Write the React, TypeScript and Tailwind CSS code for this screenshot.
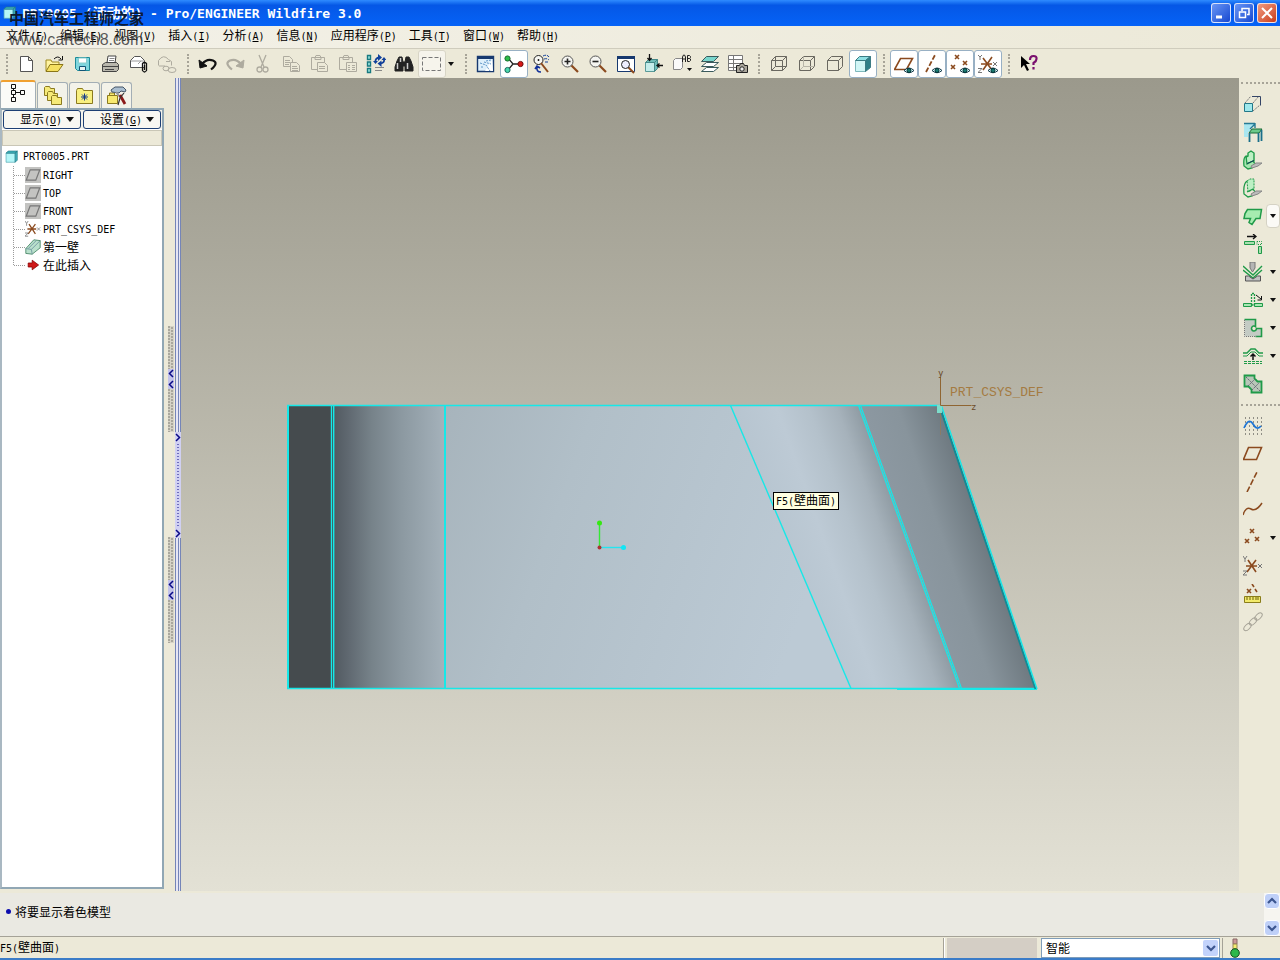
import { Fragment, type ReactNode } from 'react'

const CJK = "font-['Noto_Sans_CJK_SC',sans-serif]"
const MONO = "font-['DejaVu_Sans_Mono','Noto_Sans_CJK_SC',monospace]"

/* Latin runs are set in a 6px-wide monospace beside 12px ideographs. */
function Label({ text }: { text: string }) {
  return (
    <>
      {text.split(/([\u4e00-\u9fff]+)/).filter(Boolean).map((run, i) =>
        /[\u4e00-\u9fff]/.test(run) ? (
          <Fragment key={i}>{run}</Fragment>
        ) : (
          <span key={i} className={`${MONO} text-[10px]`}>{run}</span>
        ),
      )}
    </>
  )
}

function Ic({ children, size = 20 }: { children: ReactNode; size?: number }) {
  return (
    <svg width={size} height={size} viewBox="0 0 20 20" fill="none" stroke="#222" strokeWidth="1" className="shrink-0" aria-hidden="true">
      {children}
    </svg>
  )
}

const G = '#aeab9f'
const Brown = '#8b4a1e'
const Green = '#1f9a48'

const Eye = () => (
  <g>
    <path d="M10 16.500q5-5 10 0q-5 4.500-10 0z" fill="#dff" stroke="#134" />
    <circle cx="15" cy="16.500" r="2" fill="#187a72" stroke="#033" />
  </g>
)
const Cube = ({ back }: { back: number }) => (
  <g stroke="#6a6860">
    <path d="M2.500 6.500h11v10h-11zM2.500 6.500l4-4h11l-4 4M17.500 2.500v10l-4 4" />
    {back > 0 && <path d="M6.500 2.500v10h11M6.500 12.500l-4 4" stroke={back > 1 ? '#6a6860' : '#b8b5a8'} />}
  </g>
)
const Xs = ({ d, c = Brown }: { d: string; c?: string }) => <path d={d} stroke={c} strokeWidth="1.600" />

const icons: Record<string, ReactNode> = {
  new: <path d="M3.500 2.500h8l4 4v11h-12zM11.500 2.500v4h4" fill="#fff" stroke="#555" />,
  open: (
    <g>
      <path d="M1 17V6h5l1 2h7v3" fill="#fff3a0" stroke="#a08a20" />
      <path d="M1 17.500l4-7h13l-5 7z" fill="#f5e060" stroke="#8a7618" />
      <path d="M9 5q4-4 7 0M17.500 2v4h-4" stroke="#111" />
    </g>
  ),
  save: (
    <g>
      <path d="M2.500 3.500h14v13h-12l-2-2z" fill="#7fd6de" stroke="#1d8a98" />
      <path d="M5.500 4h8v5h-8z" fill="#fff" stroke="#8cc" />
      <path d="M6.500 12.500h6v4h-6z" fill="#e8f4f4" stroke="#157" />
    </g>
  ),
  print: (
    <g stroke="#444">
      <path d="M6 9l1-7h8l-1 7z" fill="#fff" />
      <path d="M8.500 4.500h5M8 6.500h5" stroke="#888" />
      <path d="M1.500 10.500l3-2h11l2 2v5l-2 2h-14z" fill="#b9b7ad" />
      <path d="M2 12.500h15M4 15.500h9" />
    </g>
  ),
  mail: (
    <g>
      <path d="M1.500 6.500l4-4h6l4 4v7h-14z" fill="#fff" stroke="#555" />
      <path d="M2 7h13M12 7l-3 3" stroke="#999" />
      <path d="M13.500 9.500q2-2 4 0v7q-2 3-4 0zM15.500 11v5" stroke="#111" strokeWidth="1.300" />
    </g>
  ),
  link: (
    <g stroke={G}>
      <path d="M1.500 11.500v-5q5-7 10-1l3 2v4" />
      <path d="M2 12h6M9 7.500h4" />
      <ellipse cx="9" cy="14.500" rx="3" ry="2.300" />
      <ellipse cx="15" cy="16" rx="4" ry="2.500" />
    </g>
  ),
  undo: (
    <g stroke="#111">
      <path d="M4 10q5-6 11-3.500t-2 9" strokeWidth="2.200" />
      <path d="M1 6l1 8 7-2z" fill="#111" />
    </g>
  ),
  redo: (
    <g stroke={G}>
      <path d="M15 10Q10 4 4 6.500t2 9" strokeWidth="2.200" />
      <path d="M18 6l-1 8-7-2z" fill={G} />
    </g>
  ),
  cut: (
    <g stroke={G} strokeWidth="1.300">
      <path d="M5 1l5 12M12 1L7 13" />
      <circle cx="5.500" cy="15.500" r="2.500" />
      <circle cx="11.500" cy="15.500" r="2.500" />
    </g>
  ),
  copy: (
    <g stroke={G}>
      <path d="M1.500 2.500h6l3 3v7h-9zM3 6.500h5M3 8.500h5M3 10.500h4" />
      <path d="M8.500 8.500h6l3 3v6h-9z" fill="#ece9d8" />
      <path d="M10 12.500h5M10 14.500h6M10 16.500h6" />
    </g>
  ),
  paste: (
    <g stroke={G}>
      <path d="M1.500 3.500h13v12h-13zM5 3.500l1-2h4l1 2v2H5z" />
      <path d="M7.500 8.500h7l3 3v6h-10z" fill="#ece9d8" />
      <path d="M9 12.500h6M9 14.500h6" />
    </g>
  ),
  pasteSpecial: (
    <g stroke={G}>
      <path d="M1.500 3.500h13v12h-13zM5 3.500l1-2h4l1 2v2H5z" />
      <path d="M8.500 8.500h10v9h-10z" fill="#ece9d8" />
      <path d="M10 11.500h2M14 11.500h3M10 13.500h2M14 13.500h3M10 15.500h2M14 15.500h3" />
    </g>
  ),
  regen: (
    <g>
      <path d="M1.500 1.500h3v4h-3zM1.500 8h3v4h-3zM1.500 14.500h3v4h-3z" fill="#9fe6e0" stroke="#187a80" strokeWidth="1.400" />
      <path d="M9.500 8q-.500-4 4-4.500M18 5q1 4-4 4.500" stroke="#12419a" strokeWidth="1.800" />
      <path d="M12 0l4 3.500-4 3.500zM15.500 6.500l-4 3 4 3.500zM7 7h5l-2.500 3zM15.500 6h5L18 3z" fill="#12419a" stroke="none" />
      <path d="M9 13.500h9M9 16.500h7" stroke="#888" />
    </g>
  ),
  find: (
    <g fill="#222">
      <path d="M3 7l2-4h3l1 5v9H1v-4zM17 7l-2-4h-3l-1 5v9h8v-4z" />
      <path d="M9 8h2v4H9z" />
      <path d="M3.500 9v6M13.500 9v6M6.500 4v4" stroke="#ccc" strokeWidth="1.500" />
    </g>
  ),
  select: <path d="M.5 3.500h18v13H.5z" stroke="#777" strokeDasharray="4 2" />,
  sketchView: (
    <g>
      <path d="M1.500 2.500h16v15h-16z" fill="#dff0fb" stroke="#17396f" strokeWidth="1.400" />
      <path d="M1 3.500h17" stroke="#17396f" strokeWidth="3" />
      <path d="M9 17l7-11 1 11z" fill="#fff" stroke="none" />
      <path d="M4 9l6 2 4 6M8 8l7 2M5 13h3M10 7l5-1" stroke="#5f96c8" strokeDasharray="2 1" />
    </g>
  ),
  spin: (
    <g>
      <path d="M4 4l5 6-5 6M9 10h7" strokeWidth="1.300" />
      <circle cx="3.500" cy="4.500" r="2.600" fill="#2dbd48" stroke="#176b2c" />
      <circle cx="3.500" cy="16" r="2.600" fill="#4ad6ac" stroke="#176b5c" />
      <circle cx="16.500" cy="10" r="2.600" fill="#d81818" stroke="#701010" />
    </g>
  ),
  orient: (
    <g>
      <circle cx="6.500" cy="6" r="4.500" fill="#f7f7f2" />
      <path d="M9 9l7 9" stroke={Brown} strokeWidth="2" />
      <path d="M11 2q4-2 6 1M12 5q3-1 5 1M13 8h4" stroke="#12419a" strokeDasharray="3 1" />
      <path d="M5 13q-1 5 4 5M3 15l2-3 3 2" stroke="#12319a" strokeWidth="1.600" />
      <path d="M5.500 6h2M6.500 5v2" />
    </g>
  ),
  zoomIn: (
    <g>
      <path d="M11 11l7 7" stroke={Brown} strokeWidth="2.200" />
      <circle cx="7.500" cy="7.500" r="5.500" fill="#f4f4f0" stroke="#555" />
      <path d="M4.500 7.500h6M7.500 4.500v6" strokeWidth="1.600" />
    </g>
  ),
  zoomOut: (
    <g>
      <path d="M11 11l7 7" stroke={Brown} strokeWidth="2.200" />
      <circle cx="7.500" cy="7.500" r="5.500" fill="#f4f4f0" stroke="#555" />
      <path d="M4.500 7.500h6" strokeWidth="1.600" />
    </g>
  ),
  refit: (
    <g>
      <path d="M1.500 2.500h17v15h-17z" fill="#fff" stroke="#17396f" />
      <path d="M1 3.500h18" stroke="#17396f" strokeWidth="3" />
      <path d="M12 13l6 6" stroke={Brown} strokeWidth="2" />
      <circle cx="9.500" cy="10.500" r="4" fill="#eef" />
    </g>
  ),
  reorient: (
    <g>
      <path d="M1.500 8.500h9v9h-9z" fill="#c4ecea" stroke="#5a9a98" />
      <path d="M1.500 8.500l3-3h9l-3 3zM13.500 5.500v9l-3 3v-9z" fill="#6fbdb8" stroke="#488" />
      <path d="M5.500 0v6M3.500 4l2 2.500 2-2.500M19 11.500h-6M15.500 9.500l-2.500 2 2.500 2" stroke="#111" strokeWidth="1.300" />
    </g>
  ),
  views: (
    <g>
      <path d="M1.500 6.500l2-2h7v9l-2 2h-7z" fill="#fafafa" stroke="#888" />
      <path d="M10.500 8V3l1-2h1l1 2v5M10.500 5h3M15.500 1.500v6h2l1-1V5l-1-.500h-2M17.500 4.500l1-1v-1l-1-1h-2" />
      <path d="M15 14h5l-2.500 3z" fill="#111" stroke="none" />
    </g>
  ),
  layers: (
    <g stroke="#3a5a5c">
      <path d="M1.500 17.500l5-4h12l-5 4z" fill="#fff" />
      <path d="M1.500 12.500l5-4h12l-5 4z" fill="#fff" />
      <path d="M1.500 7.500l5-5h12l-5 5z" fill="#79d6cc" />
    </g>
  ),
  viewMgr: (
    <g>
      <path d="M.5 1.500h14v15H.5zM.5 5.500h14M.5 9.500h14M.5 13.500h14M5.500 1.500v15" fill="#fff" stroke="#777" />
      <path d="M8.500 11.500h3l1-2h3l1 2h3v7h-11z" fill="#aaa69c" stroke="#222" />
      <circle cx="14" cy="15" r="2.200" fill="#eee" />
    </g>
  ),
  wire: <Cube back={2} />,
  hidden: <Cube back={1} />,
  noHidden: <Cube back={0} />,
  shaded: (
    <g stroke="#3c7c84">
      <path d="M2.500 6.500h10v11h-10z" fill="#d2f6f6" stroke="#7fb8bc" />
      <path d="M2.500 6.500l4-4h11l-5 4z" fill="#8fe0e4" />
      <path d="M12.500 6.500l5-4v11l-5 4z" fill="#2f7f88" />
    </g>
  ),
  planeEye: (
    <g>
      <path d="M.5 15.500l6-11h12l-6 11z" stroke={Brown} strokeWidth="1.600" />
      <Eye />
    </g>
  ),
  axisEye: (
    <g>
      <path d="M4 18L13 1" stroke={Brown} strokeWidth="1.800" strokeDasharray="5 2" />
      <Eye />
    </g>
  ),
  pointEye: (
    <g>
      <Xs d="M5 1l4 4M9 1L5 5M1 11l4 4M5 11l-4 4M13 7l4 4M17 7l-4 4" />
      <Eye />
    </g>
  ),
  csysEye: (
    <g>
      <Xs d="M5 4l9 12M14 3L5 16M3 10h11" />
      <path d="M0 1l2 2 2-2M2 3v3M15 8l4 4M19 8l-4 4M0 14.500h4l-4 4h4" stroke="#777" />
      <Eye />
    </g>
  ),
  help: (
    <g>
      <path d="M2 2v12l3-3 3 6 2-1-3-6h4z" fill="#000" stroke="none" />
      <path d="M11 6q0-4 3.500-4t3 3q0 2-3 4v2M14.500 13v2.500" stroke="#7a0f6e" strokeWidth="2.200" />
    </g>
  ),
  extrude: (
    <g>
      <path d="M1.500 9.500h8v8h-8z" fill="#9fe8ec" stroke="#278" />
      <path d="M2 9l6-7M10 9l6-7M10 17l7-6" stroke="#777" strokeDasharray="2 1" />
      <path d="M9 2.500h8.500v9" stroke="#346" />
    </g>
  ),
  unattached: (
    <g>
      <path d="M1 2h11l-5 5v3H5v5H1z" fill="#a9e6f0" stroke="none" />
      <path d="M1 1.500h11M12 1v5M12 2l-5 5" stroke="#267a94" strokeWidth="1.400" />
      <path d="M6 11l3-4h10l-3 4z" fill="#6bc98a" stroke="#196b38" />
      <path d="M6.500 11v9M15.500 11v9M18.500 8v11" stroke="#1a6f8a" strokeWidth="1.800" />
    </g>
  ),
  flange: (
    <g>
      <path d="M3 7l2-1V3l3-2 3 2v8l-6 3-2 1z" fill="#bdf0c4" stroke={Green} strokeWidth="1.400" />
      <path d="M3 6q-3 2-2 10l4 3 4-1 4-3-3-4-6 3z" fill="#a6e6b0" stroke={Green} strokeWidth="1.300" />
      <path d="M8 16l5-3h6l-4 3-6 2z" fill="#bbb" stroke="#888" />
      <path d="M4 13.500l7-3" stroke="#123a5a" />
    </g>
  ),
  flangeDots: (
    <g>
      <path d="M4 3l3-2h4v10l-6 3z" fill="#bdf0c4" stroke={Green} strokeDasharray="2 1" />
      <path d="M4 3Q0 6 1 16l4 3 4-1 4-3-3-4-6 3" stroke={Green} strokeWidth="1.300" />
      <path d="M8 16l5-3h6l-4 3-6 2z" fill="#bbb" stroke="#888" />
    </g>
  ),
  flat: <path d="M4.500 3.500h14l-1.500 9h-4l-4 6-3-2 1.500-4H1l1-5z" fill="#a6ecb0" stroke={Green} strokeWidth="1.500" />,
  extend: (
    <g>
      <path d="M4 2.500h9M10 0l3 2.500L10 5" stroke="#111" strokeWidth="1.300" />
      <path d="M1.500 7.500h10v3h-10zM15.500 12.500h3v7h-3z" fill="#a9dfb0" stroke={Green} />
      <path d="M14 7.500h4.500v3H14z" stroke={Green} strokeDasharray="1 1" />
    </g>
  ),
  bend: (
    <g>
      <path d="M0 4l10 9 9-9M0 8l10 8 9-8" stroke={Green} strokeWidth="1.400" />
      <path d="M7 0h5v6l-2.500 4L7 6z" fill="#b5b5b5" stroke="#777" />
      <path d="M2.500 19v-5h3l4.500 3 4.500-3h3v5z" fill="#c2c2c2" stroke="#555" />
    </g>
  ),
  unbend: (
    <g>
      <path d="M.5 13.500h8v3h-8zM11.500 13.500h8v3h-8z" fill="#a9e6b3" stroke={Green} />
      <path d="M8.500 15V3.500h3V15z" stroke={Green} strokeDasharray="2 1" strokeWidth="1.300" />
      <path d="M13 5l5 4M18.500 6v4h-4" stroke="#111" />
    </g>
  ),
  corner: (
    <g>
      <path d="M1.500 1.500h11v7a2.500 2.500 0 1 0 1 2h5v8h-17z" fill="#c4cbc4" stroke="none" />
      <path d="M1.500 1.500h11v7a2.500 2.500 0 1 0 1 2h5v8h-6" stroke={Green} strokeWidth="1.600" />
      <path d="M1.500 2v16.500h12" stroke="#777" strokeDasharray="1 1" />
    </g>
  ),
  form: (
    <g>
      <path d="M0 10h4l4-4h4l4 4h4" stroke={Green} />
      <path d="M0 7h4l4-4h4l4 4h4" stroke={Green} strokeWidth="1.400" />
      <path d="M10 14V8.500M7.500 10.500L10 8l2.500 2.500" stroke="#111" strokeWidth="1.500" />
      <path d="M1 15.500h18M1 17.500h18" stroke={Green} strokeDasharray="3 1" />
    </g>
  ),
  flatten: (
    <g>
      <path d="M1.500 1.500h10v3l3 3h4v11h-10v-3l-3-3h-4z" fill="#b8c6b8" stroke={Green} strokeWidth="1.800" />
      <path d="M3 3l14 14M5 12l7-7M9 16l7-7" stroke="#667" strokeDasharray="2 1" />
    </g>
  ),
  sketch: (
    <g>
      <path d="M2 2h17M2 6h17M2 10h17M2 14h17M2 18h17" stroke="#333" strokeDasharray="1 3" />
      <path d="M1 12q5-11 9-4t8 2" stroke="#1d75d6" strokeWidth="1.700" />
    </g>
  ),
  plane: <path d="M.5 15.500l5-12h13l-5 12z" stroke={Brown} strokeWidth="1.600" />,
  axis: <path d="M4 20L14 0" stroke={Brown} strokeWidth="1.600" strokeDasharray="6 2" />,
  curve: <path d="M0 15q3-9 8-6t11-6" stroke={Brown} strokeWidth="1.500" />,
  points: <Xs d="M7 1l4 4M11 1L7 5M2 11l4 4M6 11l-4 4M12 9l4 4M16 9l-4 4" />,
  csys: (
    <g>
      <Xs d="M5 4l8 12M13 4L4 16M3 10h11" />
      <path d="M0 0l2 3 2-3M2 3v3M15 8l4 4M19 8l-4 4M0 15h4l-4 4h4" stroke="#777" />
    </g>
  ),
  analysis: (
    <g>
      <Xs d="M4 5l4 4M8 5L4 9M9 0l2 3M12 5l2 3" />
      <path d="M1.500 12.500h16v6h-16z" fill="#f2ea6a" stroke="#8a7d1a" />
      <path d="M4 13v3M7 13v3M10 13v3M13 13v3M15 13v3" stroke="#6a6010" />
    </g>
  ),
  chain: (
    <g stroke="#a5a296">
      <ellipse cx="4.500" cy="15" rx="4.500" ry="2.500" transform="rotate(-45 4.500 15)" />
      <ellipse cx="10" cy="9.500" rx="4.500" ry="2.500" transform="rotate(-45 10 9.500)" />
      <ellipse cx="15.500" cy="4.500" rx="4.500" ry="2.500" transform="rotate(-45 15.500 4.500)" />
    </g>
  ),
  tree: <path d="M3.500 1.500h4v4h-4zM3.500 7.500h4v4h-4zM3.500 14.500h4v4h-4zM12.500 7.500h4v4h-4zM5.500 5.500v2M5.500 11.500v3M7.500 9.500h5" stroke="#111" />,
  folders: (
    <g fill="#f6ea78" stroke="#8b7a20">
      <path d="M1.500 1.500l1-1h4l1 2h4v7h-10z" />
      <path d="M4.500 6.500l1-1h4l1 2h4v7h-10z" />
      <path d="M8.500 10.500l1-1h4l1 2h4v7h-10z" />
    </g>
  ),
  favorites: (
    <g>
      <path d="M1.500 4.500l1-2h5l1 2h9v13h-16z" fill="#f8f080" stroke="#8b7a20" />
      <path d="M9.500 7.500v7M6 11h7M7 8.500l5 5M12 8.500l-5 5" stroke="#123a8a" />
    </g>
  ),
  tools: (
    <g>
      <path d="M.5 9.500h10v8H.5zM2.500 9V7h5v2" fill="#f8ea70" stroke="#8b7a20" />
      <path d="M4 4l4-3h8l3 3-1 2-4-1-2 2-7-1z" fill="#aabed0" stroke="#456" />
      <path d="M9 6l4 5" stroke="#999" strokeWidth="2" />
      <path d="M13 9l5 9" stroke="#8b1a1a" strokeWidth="2.800" />
      <path d="M17 7l-4 5-2 7" stroke="#333" strokeWidth="1.200" />
    </g>
  ),
  part: (
    <g stroke="#247a86">
      <path d="M1.500 4.500h13v13h-13z" fill="#b4f6f8" stroke="#58aab4" />
      <path d="M1.500 4.500l3-3h13l-3 3zM17.500 1.500v13l-3 3v-13z" fill="#3fb4bf" />
    </g>
  ),
  datum: (
    <g>
      <path d="M0 0h20v20H0z" fill="#c3c3c1" stroke="none" />
      <path d="M1.500 16.500l5-13h12l-5 13z" stroke="#777" strokeWidth="1.500" />
    </g>
  ),
  wall: (
    <g>
      <path d="M1 12L11 1l8 1v9l-10 8-8-1z" fill="#b9e0cc" stroke="#3b7d5c" />
      <path d="M1 12l7 1 11-11M9 19l-1-6M4 12L14 2" stroke="#6a8f9c" />
    </g>
  ),
  insert: <path d="M4 7.500h5V4l8 6-8 6v-3.500H4z" fill="#d01818" stroke="#800" />,
}

const groups: { items: [string, string][]; on?: string[]; drop?: boolean }[] = [
  { items: [['new', '新建'], ['open', '打开'], ['save', '保存'], ['print', '打印'], ['mail', '发送'], ['link', '链接']] },
  {
    items: [['undo', '撤消'], ['redo', '重做'], ['cut', '剪切'], ['copy', '复制'], ['paste', '粘贴'], ['pasteSpecial', '选择性粘贴'], ['regen', '再生'], ['find', '查找'], ['select', '选取']],
    drop: true,
  },
  {
    items: [['sketchView', '重画'], ['spin', '旋转中心'], ['orient', '定向模式'], ['zoomIn', '放大'], ['zoomOut', '缩小'], ['refit', '重新调整'], ['reorient', '重定向'], ['views', '视图列表'], ['layers', '层'], ['viewMgr', '视图管理器']],
    on: ['spin'],
  },
  { items: [['wire', '线框'], ['hidden', '隐藏线'], ['noHidden', '无隐藏线'], ['shaded', '着色']], on: ['shaded'] },
  { items: [['planeEye', '基准平面'], ['axisEye', '基准轴'], ['pointEye', '基准点'], ['csysEye', '坐标系']], on: ['planeEye', 'axisEye', 'pointEye', 'csysEye'] },
  { items: [['help', '帮助']] },
]

const menus = ['文件(F)', '编辑(E)', '视图(V)', '插入(I)', '分析(A)', '信息(N)', '应用程序(P)', '工具(T)', '窗口(W)', '帮助(H)']

const sideTop: [string, string, boolean?][] = [
  ['extrude', '拉伸'], ['unattached', '分离壁'], ['flange', '平整'], ['flangeDots', '法兰'], ['flat', '分离平整', true], ['extend', '延伸'],
  ['bend', '折弯', true], ['unbend', '展平', true], ['corner', '拐角止裂槽', true], ['form', '成形', true], ['flatten', '平整形态'],
]
const sideBottom: [string, string, boolean?][] = [
  ['sketch', '草绘'], ['plane', '平面'], ['axis', '轴'], ['curve', '曲线'], ['points', '点', true], ['csys', '坐标系'], ['analysis', '分析'], ['chain', '参照'],
]

const tree = [
  ['datum', 'RIGHT'], ['datum', 'TOP'], ['datum', 'FRONT'], ['csys', 'PRT_CSYS_DEF'], ['wall', '第一壁'], ['insert', '在此插入'],
]

const Down = () => (
  <svg width="6" height="4" viewBox="0 0 6 4" aria-hidden="true" className="shrink-0"><path d="M0 0h6L3 4z" fill="#111" /></svg>
)

function Grip() {
  return (
    <div className="flex w-[13px] shrink-0 justify-center py-1">
      <div className="border-l-2 border-dotted border-[#a7a498]" />
    </div>
  )
}

function SideTools({ items }: { items: [string, string, boolean?][] }) {
  return (
    <div className="flex flex-col">
      {items.map(([icon, name, drop]) => (
        <div key={icon} className="flex h-7 items-center pl-1">
          <button type="button" aria-label={name} className="flex size-5 items-center justify-center"><Ic>{icons[icon]}</Ic></button>
          {drop && (
            <button type="button" aria-label={`${name} 选项`} className={`ml-auto flex h-6 w-[14px] items-center justify-center ${icon === 'flat' ? 'rounded-sm border border-[#d5d2c4] bg-[#fbfaf6]' : ''}`}><Down /></button>
          )}
        </div>
      ))}
    </div>
  )
}

function Chevron({ up }: { up?: boolean }) {
  return (
    <svg width="10" height="8" viewBox="0 0 10 8" fill="none" stroke="#3c5690" strokeWidth="2.200" aria-hidden="true">
      <path d={up ? 'M1 6l4-4 4 4' : 'M1 2l4 4 4-4'} />
    </svg>
  )
}

function Handle() {
  return (
    <svg width="6" height="106" viewBox="0 0 6 106" aria-hidden="true">
      <path d="M0 0h6v106H0z" fill="#d6d3c6" />
      <path d="M1 0v106M4 1v105" stroke="#aaa89d" strokeWidth="2" strokeDasharray="2 1" />
      <path d="M0 43h6v20H0z" fill="#c3c3ea" />
      <path d="M5 44L1.500 47.500 5 51M5 55L1.500 58.500 5 62" fill="none" stroke="#0a0a86" strokeWidth="1.500" />
    </svg>
  )
}

function Model() {
  return (
    <svg viewBox="0 0 1058 813" className="absolute inset-0 size-full" aria-label="PRT0005">
      <defs>
        <linearGradient id="left"><stop offset="0" stopColor="#515960" /><stop offset=".15" stopColor="#616a72" /><stop offset=".35" stopColor="#77838a" /><stop offset=".6" stopColor="#8b98a0" /><stop offset="1" stopColor="#a5b2bb" /></linearGradient>
        <linearGradient id="mid" x2="1" y2=".25"><stop offset="0" stopColor="#a7b4bc" /><stop offset=".35" stopColor="#b1bfc8" /><stop offset="1" stopColor="#bccad5" /></linearGradient>
        <linearGradient id="band" gradientUnits="userSpaceOnUse" x1="550" x2="678" y1="0" y2="0" gradientTransform="matrix(1 0 .357 1 -116.700 0)">
          <stop offset="0" stopColor="#b7c5d0" /><stop offset=".35" stopColor="#bdcad5" /><stop offset=".6" stopColor="#b4c1cb" /><stop offset=".82" stopColor="#a6b2bb" /><stop offset="1" stopColor="#8f9ba3" />
        </linearGradient>
        <linearGradient id="right" gradientUnits="userSpaceOnUse" x1="680" x2="759" y1="0" y2="0" gradientTransform="matrix(1 0 .34 1 -111 0)">
          <stop offset="0" stopColor="#8c98a1" /><stop offset=".45" stopColor="#88949c" /><stop offset="1" stopColor="#6e7980" />
        </linearGradient>
      </defs>
      <path d="M107 327h45v283h-45z" fill="#454b4e" />
      <path d="M152 327h112v283H152z" fill="url(#left)" />
      <path d="M264 327h286l120 283H264z" fill="url(#mid)" />
      <path d="M550 327h128l101 283H670z" fill="url(#band)" />
      <path d="M678 327h81l96 283h-76z" fill="url(#right)" />
      <g fill="none" stroke="#16e8e8" strokeWidth="1.400">
        <path d="M106 327.500h653M106 610.500h750" />
        <path d="M107 327v284" strokeWidth="2" />
        <path d="M150.500 327v284M152.700 327v284" />
        <path d="M264 327v284" strokeWidth="2" />
        <path d="M549.500 327.500l120.500 283" />
        <path d="M677.500 327.500l101 283M679.500 327.500l101 283" strokeWidth="1.200" />
        <path d="M716 611h140" strokeWidth="2" />
        <path d="M758.500 328l96 283" stroke="#128a94" strokeWidth="2" />
        <path d="M760.500 328l95.500 283" />
      </g>
      <path d="M756 327h5v8h-5z" fill="#7ddccb" />
      <path d="M759.500 299v28.500h31" fill="none" stroke="#8f6532" />
      <path d="M759.500 335v22" stroke="#9a7a50" strokeOpacity=".6" />
      <g className={MONO} fill="#6a4a28">
        <text x="757" y="298" fontSize="9">y</text>
        <text x="790" y="332" fontSize="9">z</text>
      </g>
      <text x="769" y="318" fontSize="13" fill="#a47b42" className="font-['Liberation_Mono',monospace]">PRT_CSYS_DEF</text>
      <path d="M418.500 446v23" stroke="#35e835" strokeWidth="1.400" />
      <path d="M419 469.500h23" stroke="#25e5f0" strokeWidth="1.400" />
      <circle cx="418.500" cy="445" r="2.500" fill="#35e812" />
      <circle cx="442.500" cy="469.500" r="2.500" fill="#12e5f5" />
      <circle cx="418.500" cy="469.500" r="2" fill="#a33" />
    </svg>
  )
}

export default function App() {
  return (
    <div className={`relative flex min-h-screen flex-col overflow-hidden bg-[#ece9d8] text-[12px] leading-4 text-black ${CJK}`}>
      <header className="flex h-[26px] shrink-0 items-center bg-linear-to-b from-[#2f8bff] via-[#0557e6] via-20% to-[#0663f7] pr-[3px] pl-[3px]">
        <Ic size={14}>{icons.part}</Ic>
        <h1 className="ml-[5px] flex-1 text-[14px] leading-5 font-bold whitespace-pre text-white">
          <span className={`${MONO} text-[13px]`}>PRT0005 (</span>活动的<span className={`${MONO} text-[13px]`}>) - Pro/ENGINEER Wildfire 3.0</span>
        </h1>
        <div className="flex gap-[3px]">
          {['最小化', '还原', '关闭'].map((name, i) => (
            <button key={name} type="button" aria-label={name} className={`flex size-5 items-center justify-center rounded-[3px] border border-white/80 bg-linear-to-br ${i === 2 ? 'from-[#f09a80] to-[#c83a14]' : 'from-[#6a95f5] to-[#1746d0]'}`}>
              <svg width="14" height="14" viewBox="0 0 14 14" fill="none" stroke="#fff" strokeWidth="2" aria-hidden="true">
                {i === 0 && <path d="M2 11h6" strokeWidth="3" />}
                {i === 1 && <path d="M5 5V2.500h7v6h-2M2.500 6h6v5.500h-6z" strokeWidth="1.500" />}
                {i === 2 && <path d="M2 2l10 10M12 2L2 12" />}
              </svg>
            </button>
          ))}
        </div>
      </header>

      <nav className="flex h-[23px] shrink-0 items-center gap-3 border-b border-[#cfccbd] bg-linear-to-r from-[#f3f1e8] to-[#ece9d8] px-1.5 pb-0.5">
        {menus.map((m) => {
          const [name, key] = m.slice(0, -1).split('(')
          return (
            <button key={m} type="button" className="whitespace-nowrap">
              {name}<span className={`${MONO} text-[10px]`}>(<u>{key}</u>)</span>
            </button>
          )
        })}
      </nav>

      <div role="toolbar" aria-label="工具栏" className="flex h-[29px] shrink-0 pt-px">
        {groups.map((g, i) => (
          <Fragment key={i}>
            <Grip />
            {g.items.map(([icon, name]) => (
              <button key={icon} type="button" aria-label={name} className={`flex h-7 w-7 items-center justify-center rounded-[3px] border ${g.on?.includes(icon) ? 'border-[#98b0c4] bg-white' : icon === 'select' ? 'border-[#d8d5c6] bg-[#f6f4ec]' : 'border-transparent'}`}>
                <Ic>{icons[icon]}</Ic>
              </button>
            ))}
            {g.drop && <button type="button" aria-label="选取选项" className="flex w-[13px] items-center pl-0.5"><Down /></button>}
          </Fragment>
        ))}
      </div>

      <main className="flex flex-1">
        <aside className="flex w-[164px] shrink-0 flex-col pt-0.5 pb-0.5">
          <div role="tablist" className="flex h-7 items-end gap-px">
            {[['tree', '模型树'], ['folders', '文件夹浏览器'], ['favorites', '收藏夹'], ['tools', '连接']].map(([icon, name], i) => (
              <button key={icon} type="button" role="tab" aria-selected={i === 0} aria-label={name} className={`flex items-center justify-center rounded-t-[3px] border border-b-0 border-[#a3aeb5] ${i === 0 ? 'h-7 w-9 border-t-2 border-t-[#f0a030] bg-[#fbfbf8] pb-1' : 'h-[26px] w-[31px] bg-[#f3f2e9]'}`}>
                <Ic>{icons[icon]}</Ic>
              </button>
            ))}
          </div>
          <div className="flex flex-1 flex-col border-2 border-l-[#a9b8c2] border-[#91a7b4] bg-white">
            <div className="flex h-[19px] gap-0.5 bg-[#f3f2ea] pr-px pl-px">
              {['显示(O)', '设置(G)'].map((t) => {
                const [name, key] = t.slice(0, -1).split('(')
                return (
                  <button key={t} type="button" className="flex flex-1 items-center justify-end gap-1 rounded-[3px] border border-[#1d3f74] bg-[#f8f7f2] pr-1.5 pl-2 leading-4 whitespace-nowrap">
                    <span>{name}<span className={`${MONO} text-[10px]`}>(<u>{key}</u>)</span></span>
                    <svg width="8" height="5" viewBox="0 0 8 5" aria-hidden="true"><path d="M0 0h8L4 5z" fill="#111" /></svg>
                  </button>
                )
              })}
            </div>
            <div className="mt-px h-4 shrink-0 border border-[#c9c6b6] bg-[#ece9d8]" />
            <ul className="pt-0.5">
              <li className="flex h-[18px] items-center gap-1 pl-[3px]"><Ic size={14}>{icons.part}</Ic><Label text="PRT0005.PRT" /></li>
              {tree.map(([icon, name], i) => (
                <li key={name} className="flex h-[18px] items-center whitespace-nowrap">
                  <svg width="23" height="18" viewBox="0 0 23 18" fill="none" stroke="#9a9a9a" strokeDasharray="1 1" aria-hidden="true" className="shrink-0">
                    <path d={i === tree.length - 1 ? 'M11.500 0v9.500h11.500' : 'M11.500 0v18M12 9.500h11'} />
                  </svg>
                  <Ic size={16}>{icons[icon]}</Ic>
                  <span className="ml-0.5"><Label text={name} /></span>
                </li>
              ))}
            </ul>
          </div>
        </aside>

        <div className="flex w-[17px] shrink-0" role="separator" aria-orientation="vertical">
          <div className="flex w-[11px] flex-col items-center justify-center gap-[105px] pl-0.5"><Handle /><Handle /></div>
          <div className="flex w-1.5 flex-col items-stretch">
            <div className="flex-1 border-x border-[#7585b8] bg-[#e6e6f4] px-px"><div className="mx-auto h-full w-px bg-[#7585b8]" /></div>
            <svg width="6" height="106" viewBox="0 0 6 106" aria-hidden="true">
              <path d="M0 0h6v106H0z" fill="#d0d0f2" />
              <path d="M1 2l3.500 3.500L1 9M1 98l3.500 3.500L1 105" fill="none" stroke="#0a0a86" strokeWidth="1.500" />
              <path d="M3 12v84" stroke="#0a0a86" strokeDasharray="1 2" />
            </svg>
            <div className="flex-1 border-x border-[#7585b8] bg-[#e6e6f4] px-px"><div className="mx-auto h-full w-px bg-[#7585b8]" /></div>
          </div>
        </div>

        <section aria-label="模型" className="relative min-w-0 flex-1 bg-linear-to-b from-[#9b998c] to-[#e3e1d5]">
          <Model />
          <div role="tooltip" className="absolute top-[414px] left-[592px] border border-black bg-[#ffffe1] px-0.5 leading-[14px] whitespace-nowrap"><Label text="F5(壁曲面)" /></div>
        </section>

        <aside aria-label="特征工具" className="flex w-[41px] shrink-0 flex-col pt-1">
          <div className="mb-1.5 ml-0.5 border-t-2 border-dotted border-[#a7a498]" />
          <SideTools items={sideTop} />
          <div className="my-1.5 ml-0.5 border-t-2 border-dotted border-[#a7a498]" />
          <SideTools items={sideBottom} />
        </aside>
      </main>

      <section aria-label="消息" className="flex h-[45px] shrink-0 border-t-2 border-[#ece9d8] bg-[#eae9e2]">
        <div className="flex flex-1 items-center gap-1 pb-1.5 pl-1.5"><span className="size-[5px] rounded-full bg-[#0d0dae]" />将要显示着色模型</div>
        <div className="flex w-4 flex-col justify-between bg-[#f6f5f0]">
          {[true, false].map((up) => (
            <button key={String(up)} type="button" aria-label={up ? '向上滚动' : '向下滚动'} className="flex size-4 items-center justify-center rounded-sm border border-white bg-[#bfd0f8]"><Chevron up={up} /></button>
          ))}
        </div>
      </section>

      <footer className="flex h-6 shrink-0 items-stretch border-t border-b-2 border-t-[#a5a297] border-b-[#3b7cc8] pt-px">
        <div className="flex-1 self-center"><Label text="F5(壁曲面)" /></div>
        <div className="mr-0.5 border-r border-l border-r-white border-l-[#a5a297]" />
        <div className="mr-1 w-[90px] bg-[#d4cec5]" />
        <div className="relative w-[179px]">
          <select aria-label="过滤器" className="h-full w-full appearance-none border border-[#7f9db9] bg-white pl-1 text-[12px] leading-4 outline-none"><option>智能</option></select>
          <span className="pointer-events-none absolute top-0.5 right-0.5 bottom-0.5 flex w-[15px] items-center justify-center rounded-xs bg-[#c3d3fb]"><Chevron /></span>
        </div>
        <div className="ml-0.5 flex w-[58px] items-center border-l border-[#a5a297] pl-[7px]">
          <svg width="10" height="20" viewBox="0 0 10 20" aria-hidden="true">
            <path d="M3 1h4v5H3z" fill="#c99" stroke="#866" />
            <path d="M3 6h4v5H3z" fill="#f4ee70" stroke="#985" />
            <circle cx="5" cy="15" r="4.300" fill="#2db84a" stroke="#124f1e" />
          </svg>
        </div>
      </footer>

      <div className="pointer-events-none absolute top-2 left-[9px] flex flex-col whitespace-nowrap">
        <span className="text-[15px] leading-5 font-bold text-[#0b1a33]">中国汽车工程师之家</span>
        <span className="font-['Liberation_Sans',sans-serif] text-[16px] leading-6 text-[#3c3c3c]/85">www.cartech8.com</span>
      </div>
    </div>
  )
}
